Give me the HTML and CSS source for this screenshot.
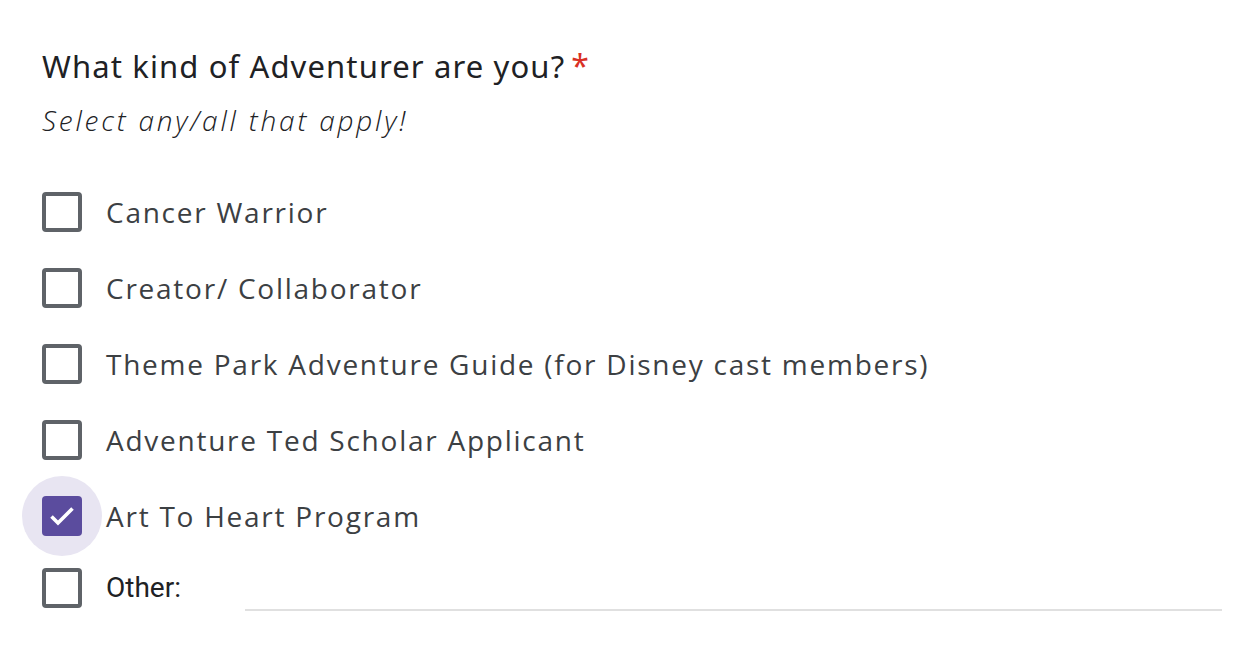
FILE: index.html
```html
<!DOCTYPE html>
<html lang="en">
<head>
<meta charset="utf-8">
<title>What kind of Adventurer are you?</title>
<link rel="stylesheet" href="styles.css">
</head>
<body>
<div class="question">
  <div class="title">What kind of Adventurer are you?<span class="req">*</span></div>
  <div class="desc">Select any/all that apply!</div>
  <div class="options">
    <div class="row">
      <span class="ctl"><span class="box"></span></span>
      <span class="label">Cancer Warrior</span>
    </div>
    <div class="row">
      <span class="ctl"><span class="box"></span></span>
      <span class="label">Creator/ Collaborator</span>
    </div>
    <div class="row">
      <span class="ctl"><span class="box"></span></span>
      <span class="label">Theme Park Adventure Guide (for Disney cast members)</span>
    </div>
    <div class="row">
      <span class="ctl"><span class="box"></span></span>
      <span class="label">Adventure Ted Scholar Applicant</span>
    </div>
    <div class="row">
      <span class="ctl on">
        <span class="box checked">
          <svg class="tick" viewBox="0 0 40 40" width="40" height="40"><polyline points="9.5,20.5 16,27 30.5,12.5" fill="none" stroke="#fff" stroke-width="3.6"/></svg>
        </span>
      </span>
      <span class="label">Art To Heart Program</span>
    </div>
    <div class="row other">
      <span class="ctl"><span class="box"></span></span>
      <span class="other-label">Other:</span>
      <span class="other-input"></span>
    </div>
  </div>
</div>
</body>
</html>
```

FILE: styles.css
```css
html, body {
  margin: 0;
  padding: 0;
  background: #ffffff;
}
.question {
  padding: 46px 38px 0 42px;
  color: #202124;
}
.title {
  font-family: "Noto Sans", sans-serif;
  font-size: 31px;
  line-height: 40px;
  font-weight: 400;
  letter-spacing: 1.12px;
  color: #202124;
}
.req {
  color: #d93025;
  margin-left: 6px;
  font-size: 32px;
}
.desc {
  margin-top: 14px;
  font-family: "Open Sans", sans-serif;
  font-style: italic;
  font-weight: 300;
  font-size: 28px;
  line-height: 40px;
  letter-spacing: 2.8px;
  color: #202124;
}
.options {
  margin-top: 34px;
  display: flex;
  flex-direction: column;
}
.row {
  display: flex;
  align-items: center;
  height: 76px;
}
.row.other {
  height: 68px;
}
.ctl {
  position: relative;
  z-index: 0;
  flex: none;
  width: 40px;
  height: 40px;
}
.ctl.on::before {
  content: "";
  position: absolute;
  left: -20px;
  top: -20px;
  width: 80px;
  height: 80px;
  border-radius: 50%;
  background: #e8e5f2;
  z-index: -1;
}
.box {
  display: block;
  width: 40px;
  height: 40px;
  box-sizing: border-box;
  border: 4px solid #5f6368;
  border-radius: 4px;
}
.box.checked {
  border: none;
  background: #5b4c9e;
}
.tick {
  display: block;
}
.label {
  margin-left: 24px;
  font-family: "Open Sans", sans-serif;
  font-size: 28px;
  line-height: 40px;
  letter-spacing: 1.75px;
  color: #3c4043;
}
.other-label {
  margin-left: 24px;
  font-family: Roboto, sans-serif;
  font-size: 28px;
  line-height: 40px;
  color: #202124;
}
.other-input {
  flex: 1;
  align-self: flex-end;
  height: 0;
  border-bottom: 2px solid #e0e0e0;
  margin-left: 64px;
  margin-bottom: 11px;
}
```
